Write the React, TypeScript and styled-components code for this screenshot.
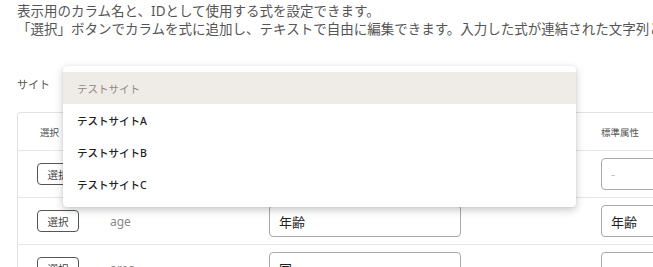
import React from 'react';
import styled, { createGlobalStyle } from 'styled-components';

const GlobalStyle = createGlobalStyle`
  body {
    margin: 0;
    background: #fff;
    font-family: "Noto Sans", "Noto Sans CJK JP", sans-serif;
    overflow: hidden;
  }
`;

const Page = styled.div`
  padding: 2px 0 0 17px;
  width: 760px;
`;

const Description = styled.p`
  margin: 0;
  font-size: 13.5px;
  line-height: 18px;
  color: #555;
  white-space: nowrap;
`;

const SiteRow = styled.div`
  display: flex;
  align-items: center;
  gap: 13px;
  margin-top: 30px;
  height: 32px;
`;

const Label = styled.span`
  font-size: 11px;
  color: #555;
  width: 33px;
`;

const SelectWrap = styled.div`
  position: relative;
  width: 513px;
  height: 32px;
`;

const Menu = styled.ul`
  position: absolute;
  top: -2px;
  left: 0;
  right: 0;
  margin: 0;
  padding: 6px 0 7px;
  list-style: none;
  background: #fff;
  border-radius: 4px;
  box-shadow: 0 3px 8px rgba(0, 0, 0, 0.22), 0 0 2px rgba(0, 0, 0, 0.08);
  z-index: 10;
`;

const MenuItem = styled.li<{ $active?: boolean }>`
  height: 32px;
  display: flex;
  align-items: center;
  padding-left: 14px;
  font-size: 10.5px;
  font-weight: ${(p) => (p.$active ? 400 : 500)};
  color: ${(p) => (p.$active ? '#8f877f' : '#222')};
  background: ${(p) => (p.$active ? '#efebe7' : '#fff')};
`;

const Table = styled.div`
  margin-top: 12px;
  border: 1px solid #e2e2e2;
  border-right: none;
  border-radius: 4px 0 0 0;
  width: 700px;
`;

const Row = styled.div<{ $head?: boolean }>`
  display: grid;
  grid-template-columns: 76px 159px 332px 1fr;
  align-items: center;
  height: ${(p) => (p.$head ? '37px' : '46px')};
  border-top: ${(p) => (p.$head ? 'none' : '1px solid #e6e6e6')};
`;

const HeadCell = styled.div<{ $pl?: number }>`
  padding-left: ${(p) => p.$pl ?? 16}px;
  font-size: 9.5px;
  color: #555;
`;

const Cell = styled.div<{ $pl?: number }>`
  padding-left: ${(p) => p.$pl ?? 16}px;
  display: flex;
  align-items: center;
`;

const PickButton = styled.button`
  width: 42px;
  height: 22px;
  border: 1px solid #555;
  border-radius: 4px;
  background: #fff;
  font-family: inherit;
  font-size: 10.5px;
  color: #444;
  padding: 0;
`;

const KeyText = styled.span`
  font-size: 12px;
  color: #888;
`;

const TextInput = styled.input<{ $w: number }>`
  width: ${(p) => p.$w}px;
  height: 32px;
  box-sizing: border-box;
  border: 1px solid #a9a9a9;
  border-radius: 4px;
  padding: 0 9px;
  font-family: inherit;
  font-size: 13px;
  color: #222;
  background: #fff;
  outline: none;
  &::placeholder {
    color: #bbb;
  }
`;

const rows = [
  { key: 'id', label: '', attr: '' },
  { key: 'age', label: '年齢', attr: '年齢' },
  { key: 'area', label: '国', attr: '' },
];

export default function App() {
  return (
    <Page>
      <GlobalStyle />
      <Description>
        表示用のカラム名と、IDとして使用する式を設定できます。
        <br />
        「選択」ボタンでカラムを式に追加し、テキストで自由に編集できます。入力した式が連結された文字列として使用されます。
      </Description>
      <SiteRow>
        <Label>サイト</Label>
        <SelectWrap>
          <Menu>
            <MenuItem $active>テストサイト</MenuItem>
            <MenuItem>テストサイトA</MenuItem>
            <MenuItem>テストサイトB</MenuItem>
            <MenuItem>テストサイトC</MenuItem>
          </Menu>
        </SelectWrap>
      </SiteRow>
      <Table>
        <Row $head>
          <HeadCell $pl={22}>選択</HeadCell>
          <HeadCell>キー</HeadCell>
          <HeadCell>カラム名</HeadCell>
          <HeadCell>標準属性</HeadCell>
        </Row>
        {rows.map((r) => (
          <Row key={r.key}>
            <Cell $pl={19}>
              <PickButton>選択</PickButton>
            </Cell>
            <Cell>
              <KeyText>{r.key}</KeyText>
            </Cell>
            <Cell>
              <TextInput $w={192} defaultValue={r.label} />
            </Cell>
            <Cell>
              <TextInput $w={160} defaultValue={r.attr} placeholder="-" />
            </Cell>
          </Row>
        ))}
      </Table>
    </Page>
  );
}
